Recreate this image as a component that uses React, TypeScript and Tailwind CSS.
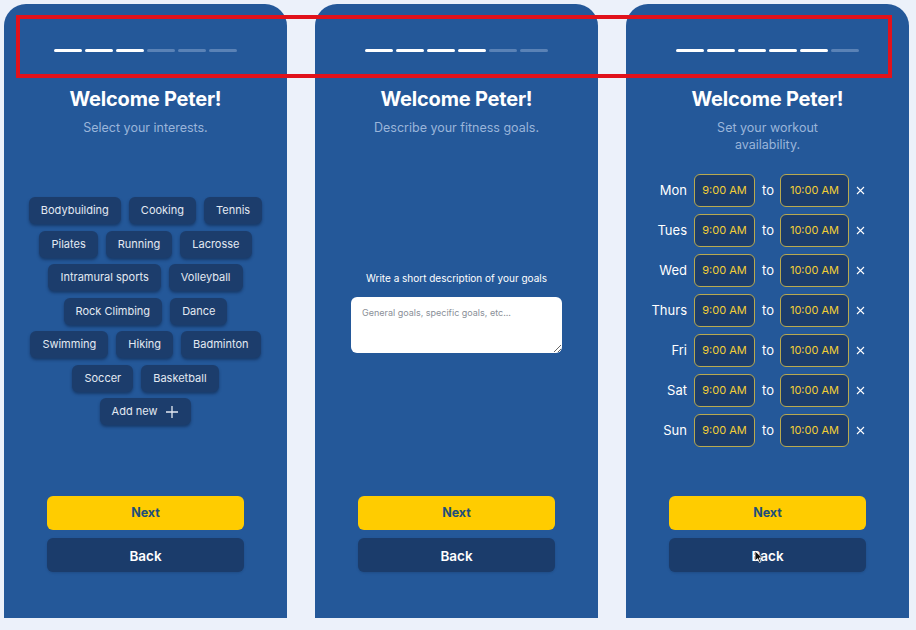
import { ReactNode } from 'react'

const chipRows = [
  ['Bodybuilding', 'Cooking', 'Tennis'],
  ['Pilates', 'Running', 'Lacrosse'],
  ['Intramural sports', 'Volleyball'],
  ['Rock Climbing', 'Dance'],
  ['Swimming', 'Hiking', 'Badminton'],
  ['Soccer', 'Basketball'],
]

const days = ['Mon', 'Tues', 'Wed', 'Thurs', 'Fri', 'Sat', 'Sun']

function Progress({ done }: { done: number }) {
  return (
    <div className="flex gap-[3px]">
      {[0, 1, 2, 3, 4, 5].map((i) => (
        <div
          key={i}
          className={i < done ? 'w-[28px] h-[3px] rounded-full bg-white' : 'w-[28px] h-[3px] rounded-full bg-[#5a82b6]'}
        />
      ))}
    </div>
  )
}

function Panel({ done, subtitle, children }: { done: number; subtitle: ReactNode; children: ReactNode }) {
  return (
    <section className="w-[283px] h-[614px] shrink-0 bg-[#245899] rounded-t-[22px] flex flex-col items-center pt-[45px] pb-[46px]">
      <Progress done={done} />
      <h1 className="mt-[33px] text-[20px] leading-[28px] font-bold text-white tracking-[-0.2px]">Welcome Peter!</h1>
      <p className="mt-[6px] max-w-[166px] text-center text-[12.5px] leading-[17px] text-[#9ab5da]">{subtitle}</p>
      {children}
      <div className="flex-1" />
      <button className="w-[197px] h-[34px] rounded-[6px] bg-[#ffcc00] text-[12.5px] font-bold text-[#1e4f7a]">Next</button>
      <button className="mt-[8px] w-[197px] h-[34px] rounded-[6px] bg-[#1b3c6b] pt-[2px] text-[13.5px] font-semibold text-white shadow-sm">
        Back
      </button>
    </section>
  )
}

function Chip({ children }: { children: ReactNode }) {
  return (
    <div className="h-[27px] px-[12px] flex items-center rounded-[6px] bg-[#1c3d6c] text-[11px] text-[#e3e9f2] shadow-[0_2px_3px_rgba(8,24,52,0.45)]">
      {children}
    </div>
  )
}

function TimeBox({ value, wide }: { value: string; wide?: boolean }) {
  return (
    <div
      className={
        (wide ? 'w-[69px]' : 'w-[61px]') +
        ' h-[33px] flex items-center justify-center rounded-[6px] border border-[#b9a94e] bg-[#1c3d6c] text-[11px] text-[#f3cf35]'
      }
    >
      {value}
    </div>
  )
}

export default function App() {
  return (
    <div className="relative w-[916px] h-[630px] bg-[#ecf1fa] font-['Inter',sans-serif] overflow-hidden">
      <div className="flex gap-[28px] pl-[4px] pt-[4px]">
        <Panel done={3} subtitle="Select your interests.">
          <div className="mt-[61px] flex flex-col items-center gap-[6.5px]">
            {chipRows.map((row, i) => (
              <div key={i} className="flex justify-center gap-[8px]">
                {row.map((c) => (
                  <Chip key={c}>{c}</Chip>
                ))}
              </div>
            ))}
            <Chip>
              Add new
              <svg width="14" height="14" viewBox="0 0 14 14" className="ml-[8px]">
                <path d="M7 1v12M1 7h12" stroke="#e3e9f2" strokeWidth="1.3" />
              </svg>
            </Chip>
          </div>
        </Panel>

        <Panel done={4} subtitle="Describe your fitness goals.">
          <p className="mt-[134px] text-[10px] leading-[16px] text-white">Write a short description of your goals</p>
          <textarea
            readOnly
            placeholder="General goals, specific goals, etc..."
            className="mt-[11px] w-[211px] h-[56px] rounded-[6px] bg-white px-[11px] py-[9px] text-[9px] text-gray-700 placeholder:text-[#8a8f98] outline-none"
          />
        </Panel>

        <Panel done={5} subtitle="Set your workout availability.">
          <div className="mt-[21px] self-stretch pl-[23px] flex flex-col gap-[7px]">
            {days.map((d) => (
              <div key={d} className="flex items-center">
                <span className="w-[38px] text-right text-[13px] text-white">{d}</span>
                <div className="ml-[7px]">
                  <TimeBox value="9:00 AM" />
                </div>
                <span className="mx-[7px] w-[11px] text-[13px] text-white">to</span>
                <TimeBox value="10:00 AM" wide />
                <svg width="9" height="9" viewBox="0 0 9 9" className="ml-[7px]">
                  <path d="M1 1l7 7M8 1L1 8" stroke="#ffffff" strokeWidth="1.1" />
                </svg>
              </div>
            ))}
          </div>
        </Panel>
      </div>

      {/* highlight box drawn over the progress bars */}
      <div className="absolute left-[16px] top-[15px] w-[876px] h-[63px] border-[4px] border-[#e1121b] pointer-events-none" />

      {/* mouse cursor */}
      <svg width="10" height="14" viewBox="0 0 10 14" className="absolute left-[754px] top-[550px]">
        <path d="M1 1v10l2.6-2.4L5.4 12.5l1.6-.7-1.8-3.8H8.6z" fill="#111" stroke="#fff" strokeWidth="0.8" />
      </svg>
    </div>
  )
}
